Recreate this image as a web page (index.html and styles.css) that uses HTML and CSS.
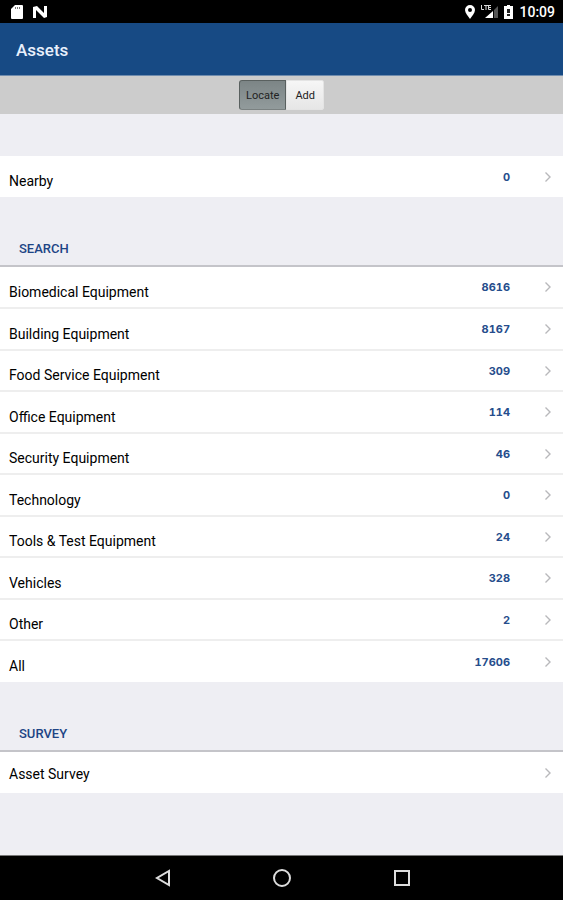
FILE: index.html
```html
<!DOCTYPE html>
<html lang="en">
<head>
<meta charset="utf-8">
<meta name="viewport" content="width=device-width, initial-scale=1">
<title>Assets</title>
<link rel="stylesheet" href="styles.css">
</head>
<body>
<div class="status">
  <div class="status-group">
    <svg class="sd" width="12" height="14" viewBox="0 0 12 14"><path fill="#fff" d="M4 0h7q1 0 1 1v12q0 1-1 1H1q-1 0-1-1V4z"/><path stroke="#777" stroke-width="1" d="M4.500 2v2M6.500 2v2M8.500 2v2"/></svg>
    <svg width="14" height="12" viewBox="0 0 14 12"><path fill="#aaa" d="M0 1h3v11H0zM11 0h3v11h-3z"/><path fill="#fff" d="M0 1l4-1 7 7V0h3v11l-3 1-8-8v8H0z"/></svg>
  </div>
  <div class="status-group status-right">
    <svg width="10" height="14" viewBox="0 0 10 14"><path fill="#fff" fill-rule="evenodd" d="M5 0a5 5 0 0 1 5 5c0 3-3 6-5 9C3 11 0 8 0 5a5 5 0 0 1 5-5zm0 3a2 2 0 1 0 0 4 2 2 0 0 0 0-4z"/></svg>
    <svg width="17" height="14" viewBox="0 0 17 14"><path fill="#555" d="M17 1v12h-4V5z"/><path fill="#fff" d="M12 6v7H4z"/><path fill="none" stroke="#ddd" d="M.5 0v4.500H3M3 .5h4M5 .5v4.500M7.500 0v4.500H10M7.500 .5H10M7.500 2.500H10"/></svg>
    <svg width="9" height="14" viewBox="0 0 9 14"><path fill="#fff" d="M3 0h3v1h3v13H0V1h3z"/><path fill="#222" d="M3 4h3v4H3zM3 9h3v2H3z"/></svg>
    <span class="clock">10:09</span>
  </div>
</div>
<header class="header"><h1>Assets</h1></header>
<div class="toolbar">
  <div class="segments">
    <button type="button" class="segment active" aria-pressed="true">Locate</button><button type="button" class="segment" aria-pressed="false">Add</button>
  </div>
</div>
<main class="main">
  <nav class="list nearby">
    <a class="row" href="#"><span class="label">Nearby</span><span class="count">0</span><svg class="chevron" viewBox="0 0 6 10"><path d="M.5.500 5 5 .5 9.500"/></svg></a>
  </nav>
  <h2 class="heading">SEARCH</h2>
  <nav class="list ruled">
    <a class="row" href="#"><span class="label">Biomedical Equipment</span><span class="count">8616</span><svg class="chevron" viewBox="0 0 6 10"><path d="M.5.500 5 5 .5 9.500"/></svg></a>
    <a class="row" href="#"><span class="label">Building Equipment</span><span class="count">8167</span><svg class="chevron" viewBox="0 0 6 10"><path d="M.5.500 5 5 .5 9.500"/></svg></a>
    <a class="row" href="#"><span class="label">Food Service Equipment</span><span class="count">309</span><svg class="chevron" viewBox="0 0 6 10"><path d="M.5.500 5 5 .5 9.500"/></svg></a>
    <a class="row" href="#"><span class="label">Office Equipment</span><span class="count">114</span><svg class="chevron" viewBox="0 0 6 10"><path d="M.5.500 5 5 .5 9.500"/></svg></a>
    <a class="row" href="#"><span class="label">Security Equipment</span><span class="count">46</span><svg class="chevron" viewBox="0 0 6 10"><path d="M.5.500 5 5 .5 9.500"/></svg></a>
    <a class="row" href="#"><span class="label">Technology</span><span class="count">0</span><svg class="chevron" viewBox="0 0 6 10"><path d="M.5.500 5 5 .5 9.500"/></svg></a>
    <a class="row" href="#"><span class="label">Tools &amp; Test Equipment</span><span class="count">24</span><svg class="chevron" viewBox="0 0 6 10"><path d="M.5.500 5 5 .5 9.500"/></svg></a>
    <a class="row" href="#"><span class="label">Vehicles</span><span class="count">328</span><svg class="chevron" viewBox="0 0 6 10"><path d="M.5.500 5 5 .5 9.500"/></svg></a>
    <a class="row" href="#"><span class="label">Other</span><span class="count">2</span><svg class="chevron" viewBox="0 0 6 10"><path d="M.5.500 5 5 .5 9.500"/></svg></a>
    <a class="row" href="#"><span class="label">All</span><span class="count">17606</span><svg class="chevron" viewBox="0 0 6 10"><path d="M.5.500 5 5 .5 9.500"/></svg></a>
  </nav>
  <h2 class="heading">SURVEY</h2>
  <nav class="list ruled survey">
    <a class="row" href="#"><span class="label">Asset Survey</span><svg class="chevron" viewBox="0 0 6 10"><path d="M.5.500 5 5 .5 9.500"/></svg></a>
  </nav>
</main>
<footer class="navbar">
  <button type="button" aria-label="Back"><svg width="18" height="20" viewBox="0 0 18 20"><path d="M16 3v14L4 10z"/></svg></button>
  <button type="button" aria-label="Home"><svg width="20" height="20" viewBox="0 0 20 20"><circle cx="10" cy="10" r="8"/></svg></button>
  <button type="button" aria-label="Recent apps"><svg width="18" height="18" viewBox="0 0 18 18"><path d="M2 2h14v14H2z"/></svg></button>
</footer>
</body>
</html>
```
FILE: styles.css
```css
* { box-sizing: border-box; }
body {
  margin: 0;
  min-height: 100vh;
  display: flex;
  flex-direction: column;
  background: #eeeef3;
  color: #000;
  font-family: Roboto, "Liberation Sans", sans-serif;
}
.status {
  height: 23px;
  padding: 0 8px 0 11px;
  display: flex;
  justify-content: space-between;
  align-items: center;
  background: #000;
}
.status-group { display: flex; align-items: center; gap: 10px; }
.status-right { gap: 6px; }
.clock { color: #fff; font-size: 14px; line-height: 20px; font-weight: 500; }
.header {
  height: 53px;
  padding: 2px 16px 0;
  display: flex;
  align-items: center;
  background: #174a84;
  border-bottom: 1px solid #6f8cae;
}
h1 { margin: 0; color: #e8f0fc; font-size: 17px; line-height: 24px; font-weight: 500; }
.toolbar {
  height: 38px;
  display: flex;
  justify-content: center;
  align-items: center;
  background: #ccc;
}
.segments { display: flex; }
.segment {
  height: 30px;
  padding: 1px 8px 0;
  border: 1px solid #e4e4e4;
  border-radius: 0 2px 2px 0;
  background: linear-gradient(#f6f6f6, #e6e6e6);
  color: #222;
  font: 11px/16px Roboto, "Liberation Sans", sans-serif;
}
.segment.active {
  padding: 1px 6px 0;
  border-color: #59605f #59605f #7a8181;
  border-radius: 3px 0 0 3px;
  background: linear-gradient(#7c8586, #929b9c);
}
.main { flex: 1; padding-top: 42px; }
.list { background: #fff; }
.ruled { border-top: 2px solid #c4c4c9; }
.row {
  display: flex;
  align-items: center;
  min-height: 41px;
  padding: 0 12px 0 9px;
  color: inherit;
  text-decoration: none;
}
.row:nth-child(even) { min-height: 42px; }
.row + .row { border-top: 1px solid #eee; }
.row:not(:last-child) { border-bottom: 1px solid #eee; }
.label { flex: 1; padding-top: 9px; font-size: 14px; line-height: 18px; }
.survey .label { padding-top: 2px; }
.count {
  margin-right: 35px;
  color: #264d8c;
  font: 700 11px/14px Inter, "DejaVu Sans", sans-serif;
  font-variant-numeric: tabular-nums;
}
.chevron { width: 6px; height: 10px; fill: none; stroke: #b8b8bb; stroke-width: 1.4; overflow: visible; }
.heading {
  margin: 0;
  padding: 43px 19px 7px;
  color: #1d4585;
  font-size: 13px;
  line-height: 18px;
  font-weight: 500;
}
.navbar {
  height: 45px;
  display: flex;
  justify-content: center;
  align-items: center;
  gap: 80px;
  background: #000;
  border-top: 1px solid #777;
}
.navbar button { width: 40px; height: 40px; padding: 0; border: 0; background: none; display: grid; place-items: center; }
.navbar svg { fill: none; stroke: #ddd; stroke-width: 2; }
```
